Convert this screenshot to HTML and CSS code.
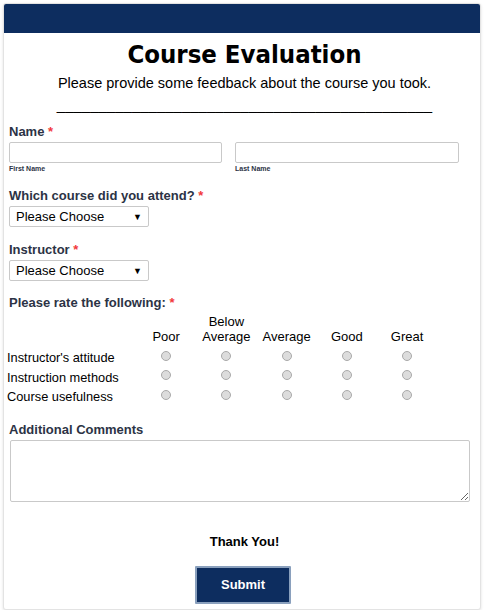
FILE: index.html
```html
<!DOCTYPE html>
<html>
<head>
<meta charset="utf-8">
<link rel="stylesheet" href="styles.css">
</head>
<body>
<div class="card">
  <div class="topbar"></div>
  <div class="content">
    <h1 class="title">Course Evaluation</h1>
    <p class="subtitle">Please provide some feedback about the course you took.</p>
    <p class="rule">_____________________________________________</p>

    <div class="field f-name">
      <div class="label">Name <span class="req">*</span></div>
      <div class="name-row">
        <div class="name-col">
          <input class="text" type="text">
          <div class="sublabel">First Name</div>
        </div>
        <div class="name-col">
          <input class="text" type="text">
          <div class="sublabel">Last Name</div>
        </div>
      </div>
    </div>

    <div class="field f-course">
      <div class="label">Which course did you attend? <span class="req">*</span></div>
      <div class="select"><span>Please Choose</span><span class="arrow">▼</span></div>
    </div>

    <div class="field f-instr">
      <div class="label">Instructor <span class="req">*</span></div>
      <div class="select"><span>Please Choose</span><span class="arrow">▼</span></div>
    </div>

    <div class="field f-rate">
      <div class="label">Please rate the following: <span class="req">*</span></div>
      <div class="matrix">
        <div class="head"></div>
        <div class="head">Poor</div>
        <div class="head">Below<br>Average</div>
        <div class="head">Average</div>
        <div class="head">Good</div>
        <div class="head">Great</div>

        <div class="rowlabel">Instructor's attitude</div>
        <div class="cell"><input type="radio" name="r1"></div>
        <div class="cell"><input type="radio" name="r1"></div>
        <div class="cell"><input type="radio" name="r1"></div>
        <div class="cell"><input type="radio" name="r1"></div>
        <div class="cell"><input type="radio" name="r1"></div>

        <div class="rowlabel">Instruction methods</div>
        <div class="cell"><input type="radio" name="r2"></div>
        <div class="cell"><input type="radio" name="r2"></div>
        <div class="cell"><input type="radio" name="r2"></div>
        <div class="cell"><input type="radio" name="r2"></div>
        <div class="cell"><input type="radio" name="r2"></div>

        <div class="rowlabel">Course usefulness</div>
        <div class="cell"><input type="radio" name="r3"></div>
        <div class="cell"><input type="radio" name="r3"></div>
        <div class="cell"><input type="radio" name="r3"></div>
        <div class="cell"><input type="radio" name="r3"></div>
        <div class="cell"><input type="radio" name="r3"></div>
      </div>
    </div>

    <div class="field f-comments">
      <div class="label">Additional Comments</div>
      <textarea class="textarea"></textarea>
    </div>

    <p class="thanks">Thank You!</p>
    <div class="submit-row"><button class="submit">Submit</button></div>
  </div>
</div>
</body>
</html>
```
FILE: styles.css
```css
html, body {
  margin: 0;
  padding: 0;
  background: #ffffff;
}
body {
  font-family: "Liberation Sans", Arial, sans-serif;
  color: #2c3345;
}
.card {
  margin: 3px 0 0 3px;
  width: 478px;
  height: 607px;
  border: 1px solid #e3e3e3;
  border-radius: 3px;
  box-shadow: 0 1px 3px rgba(0,0,0,0.12);
  background: #fff;
  overflow: hidden;
  box-sizing: border-box;
}
.topbar {
  height: 29px;
  background: #0d2d5f;
}
.content {
  padding: 0 0 0 5px;
}
.title {
  margin: 6px 0 0;
  text-align: center;
  font-family: "DejaVu Sans Condensed", "DejaVu Sans", sans-serif;
  font-weight: bold;
  font-size: 25.5px;
  line-height: 30px;
  color: #000;
}
.subtitle {
  margin: 5px 0 0;
  text-align: center;
  font-size: 14.5px;
  line-height: 18px;
  color: #000;
}
.rule {
  margin: 4px 0 0;
  text-align: center;
  font-size: 15px;
  line-height: 18px;
  color: #000;
}
.label {
  font-size: 13px;
  font-weight: bold;
  line-height: 16px;
  color: #2c3345;
}
.req {
  color: #f23a3c;
}
.f-name { margin-top: 10px; }
.f-course { margin-top: 14px; }
.f-instr { margin-top: 15px; }
.f-rate { margin-top: 14px; }
.f-comments { margin-top: 15px; }
.name-row {
  display: flex;
  gap: 13px;
  margin-top: 2px;
}
.name-col {
  width: 224px;
}
.name-col:first-child { width: 213px; }
.text {
  display: block;
  box-sizing: border-box;
  width: 100%;
  height: 21px;
  margin: 0;
  border: 1px solid #c9c9c9;
  border-radius: 2px;
  background: #fff;
}
.sublabel {
  font-size: 7px;
  font-weight: bold;
  line-height: 10px;
  margin-top: 1px;
  color: #2c3345;
}
.select {
  display: flex;
  justify-content: space-between;
  align-items: center;
  box-sizing: border-box;
  width: 140px;
  height: 21px;
  margin-top: 2px;
  padding: 0 6px 0 6px;
  border: 1px solid #c9c9c9;
  border-radius: 2px;
  font-size: 13px;
  color: #000;
}
.arrow {
  font-size: 9px;
  color: #000;
}
.f-rate .label { margin-bottom: 3px; }
.matrix {
  display: grid;
  grid-template-columns: 129px repeat(5, 60.25px);
  margin-left: -2px;
}
.head {
  display: flex;
  align-items: flex-end;
  justify-content: center;
  text-align: center;
  font-size: 13px;
  line-height: 15px;
  color: #000;
  padding-bottom: 4px;
}
.rowlabel {
  font-size: 12.8px;
  line-height: 19.5px;
  color: #000;
}
.cell {
  display: flex;
  justify-content: center;
  align-items: center;
  height: 19.5px;
}
.cell input {
  -webkit-appearance: none;
  appearance: none;
  width: 10px;
  height: 10px;
  margin: 0 0 4px;
  border: 1px solid #a9a9a9;
  border-radius: 50%;
  background: #dcdcdc;
}
.textarea {
  display: block;
  box-sizing: border-box;
  width: 460px;
  height: 62px;
  margin: 2px 0 0 1px;
  border: 1px solid #c9c9c9;
  border-radius: 2px;
  resize: vertical;
}
.thanks {
  margin: 32px 0 0;
  text-align: center;
  font-size: 13px;
  font-weight: bold;
  line-height: 16px;
  color: #000;
}
.submit-row {
  display: flex;
  justify-content: center;
  margin-top: 16px;
  padding-right: 3px;
}
.submit {
  width: 96px;
  height: 38px;
  background: #0d2d5f;
  color: #fff;
  border: 2px solid #8aa0bd;
  border-radius: 1px;
  font-family: "Liberation Sans", Arial, sans-serif;
  font-size: 13px;
  font-weight: bold;
}
```
